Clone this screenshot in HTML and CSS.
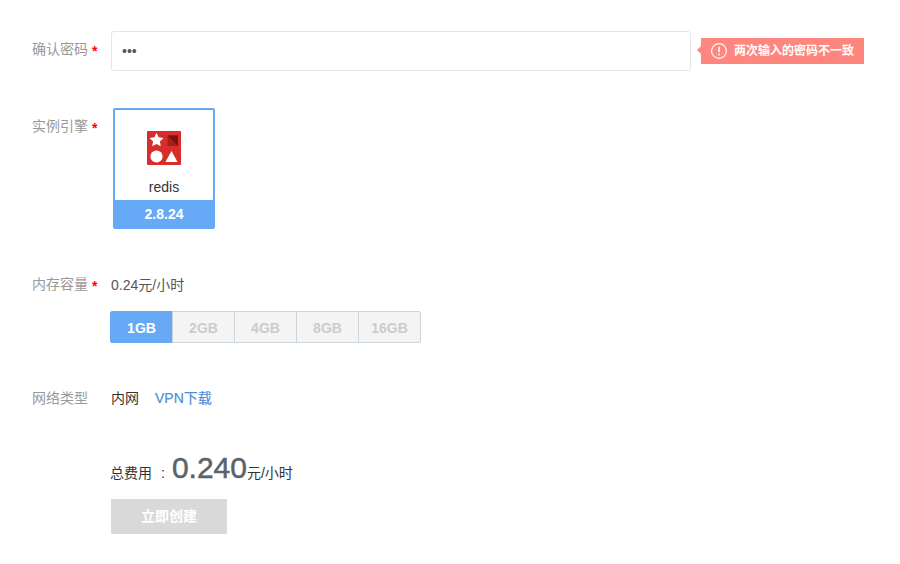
FILE: index.html
```html
<!DOCTYPE html>
<html lang="zh-CN">
<head>
<meta charset="utf-8">
<title>redis</title>
<link rel="stylesheet" href="styles.css">
</head>
<body>
<form class="form">
  <div class="row row-password">
    <label class="label" for="confirm">确认密码<span class="required">*</span></label>
    <input class="input" id="confirm" type="text" value="•••">
    <div class="error">
      <svg class="error-icon" viewBox="0 0 16 16"><circle cx="8" cy="8" r="7.4" fill="none" stroke="#fff" stroke-width="1.1"/><path d="M8 3.7v5.6M8 10.7v1.6" stroke="#fff" stroke-width="1.6"/></svg>
      <span>两次输入的密码不一致</span>
    </div>
  </div>
  <div class="row row-engine">
    <span class="label">实例引擎<span class="required">*</span></span>
    <div class="engine">
      <div class="engine-body">
        <svg class="engine-icon" viewBox="0 0 34 34">
          <rect width="34" height="34" rx="1" fill="#d72d2b"/>
          <path d="M9.500 1.800l2.100 4.500 4.900.7-3.600 3.400.9 4.900-4.300-2.400-4.300 2.400.9-4.900L2.500 7l4.900-.7z" fill="#fff"/>
          <path d="M20.500 4.500h10.500v10.500H20.500z" fill="#a91f1c"/>
          <path d="M20.500 4.500h10.500v10.500z" fill="#7a110f"/>
          <circle cx="9.500" cy="25.500" r="6.100" fill="#fff"/>
          <path d="M24.500 20l6 11h-12z" fill="#fff"/>
        </svg>
        <span class="engine-name">redis</span>
      </div>
      <div class="engine-version">2.8.24</div>
    </div>
  </div>
  <div class="row row-memory">
    <span class="label">内存容量<span class="required">*</span></span>
    <div>
      <div class="price">0.24元/小时</div>
      <div class="sizes">
        <button class="size active" type="button">1GB</button>
        <button class="size" type="button">2GB</button>
        <button class="size" type="button">4GB</button>
        <button class="size" type="button">8GB</button>
        <button class="size" type="button">16GB</button>
      </div>
    </div>
  </div>
  <div class="row row-network">
    <span class="label">网络类型</span>
    <span class="network">内网</span>
    <a class="vpn">VPN下载</a>
  </div>
  <div class="footer">
    <div class="total"><span class="total-label">总费用</span><span class="colon">:</span><span class="amount">0.240</span><span>元/小时</span></div>
    <button class="submit" type="button">立即创建</button>
  </div>
</form>
</body>
</html>
```
FILE: styles.css
```css
* { box-sizing: border-box; }
body {
  margin: 0;
  background: #fff;
  color: #333;
  font: 14px/20px "Liberation Sans", "Noto Sans CJK SC", sans-serif;
}
button, input { font: inherit; }
.form { padding: 31px 0 0 32px; }
.row { display: flex; align-items: flex-start; }
.label { flex: none; width: 79px; color: #999; }
.required {
  margin-left: 4px;
  color: #f00;
  font-weight: bold;
  line-height: 1;
  vertical-align: -2px;
}
.row-password { height: 77px; }
.row-password .label { padding-top: 8px; }
.input {
  width: 580px;
  height: 40px;
  padding: 0 10px;
  border: 1px solid #e0e6eb;
  border-radius: 3px;
  color: #555;
  outline: none;
}
.error {
  position: relative;
  display: flex;
  align-items: center;
  gap: 7px;
  width: 163px;
  height: 26px;
  margin: 7px 0 0 10px;
  padding-left: 10px;
  background: #ff867f;
  color: #fff;
  font-size: 12px;
  font-weight: bold;
  white-space: nowrap;
}
.error::before {
  content: "";
  position: absolute;
  left: -4px;
  top: 8px;
  border: solid transparent;
  border-width: 4px 4px 4px 0;
  border-right-color: #ff867f;
}
.error-icon { flex: none; width: 16px; height: 16px; }
.row-engine { height: 167px; }
.row-engine .label { padding-top: 8px; }
.engine {
  width: 102px;
  height: 121px;
  margin-left: 2px;
  border: 2px solid #66a9f7;
  border-radius: 2px;
}
.engine-body {
  display: flex;
  flex-direction: column;
  align-items: center;
  height: 90px;
  padding-top: 21px;
}
.engine-icon { flex: none; width: 34px; height: 34px; }
.engine-name { margin-top: 12px; }
.engine-version {
  height: 27px;
  background: #66a9f7;
  color: #fff;
  font-weight: bold;
  line-height: 28px;
  text-align: center;
}
.row-memory { height: 113px; }
.row-memory .label { margin-top: -1px; }
.price { color: #555; }
.sizes { display: flex; margin: 16px 0 0 -1px; }
.size {
  width: 63px;
  height: 32px;
  margin-right: -1px;
  padding: 2px 0 0;
  border: 1px solid #c9d5df;
  background: #f4f4f4;
  color: #ccc;
  font-weight: bold;
}
.size:last-child { border-radius: 0 2px 2px 0; }
.size.active {
  border-color: #66a9f7;
  border-radius: 2px 0 0 2px;
  background: #66a9f7;
  color: #fff;
}
.row-network { height: 64px; }
.vpn { margin-left: 16px; color: #4a90d9; -webkit-text-stroke: 0.2px #4a90d9; }
.footer { margin-left: 78px; }
.total { display: flex; align-items: baseline; height: 47px; line-height: 32px; }
.colon { margin: 0 7px 0 9px; }
.amount { color: #5a6368; font-size: 30px; -webkit-text-stroke: 0.5px #5a6368; }
.submit {
  display: block;
  width: 116px;
  height: 35px;
  margin-left: 1px;
  padding: 0 0 2px;
  border: 0;
  background: #d9d9d9;
  color: #fff;
  font-weight: bold;
}
```
